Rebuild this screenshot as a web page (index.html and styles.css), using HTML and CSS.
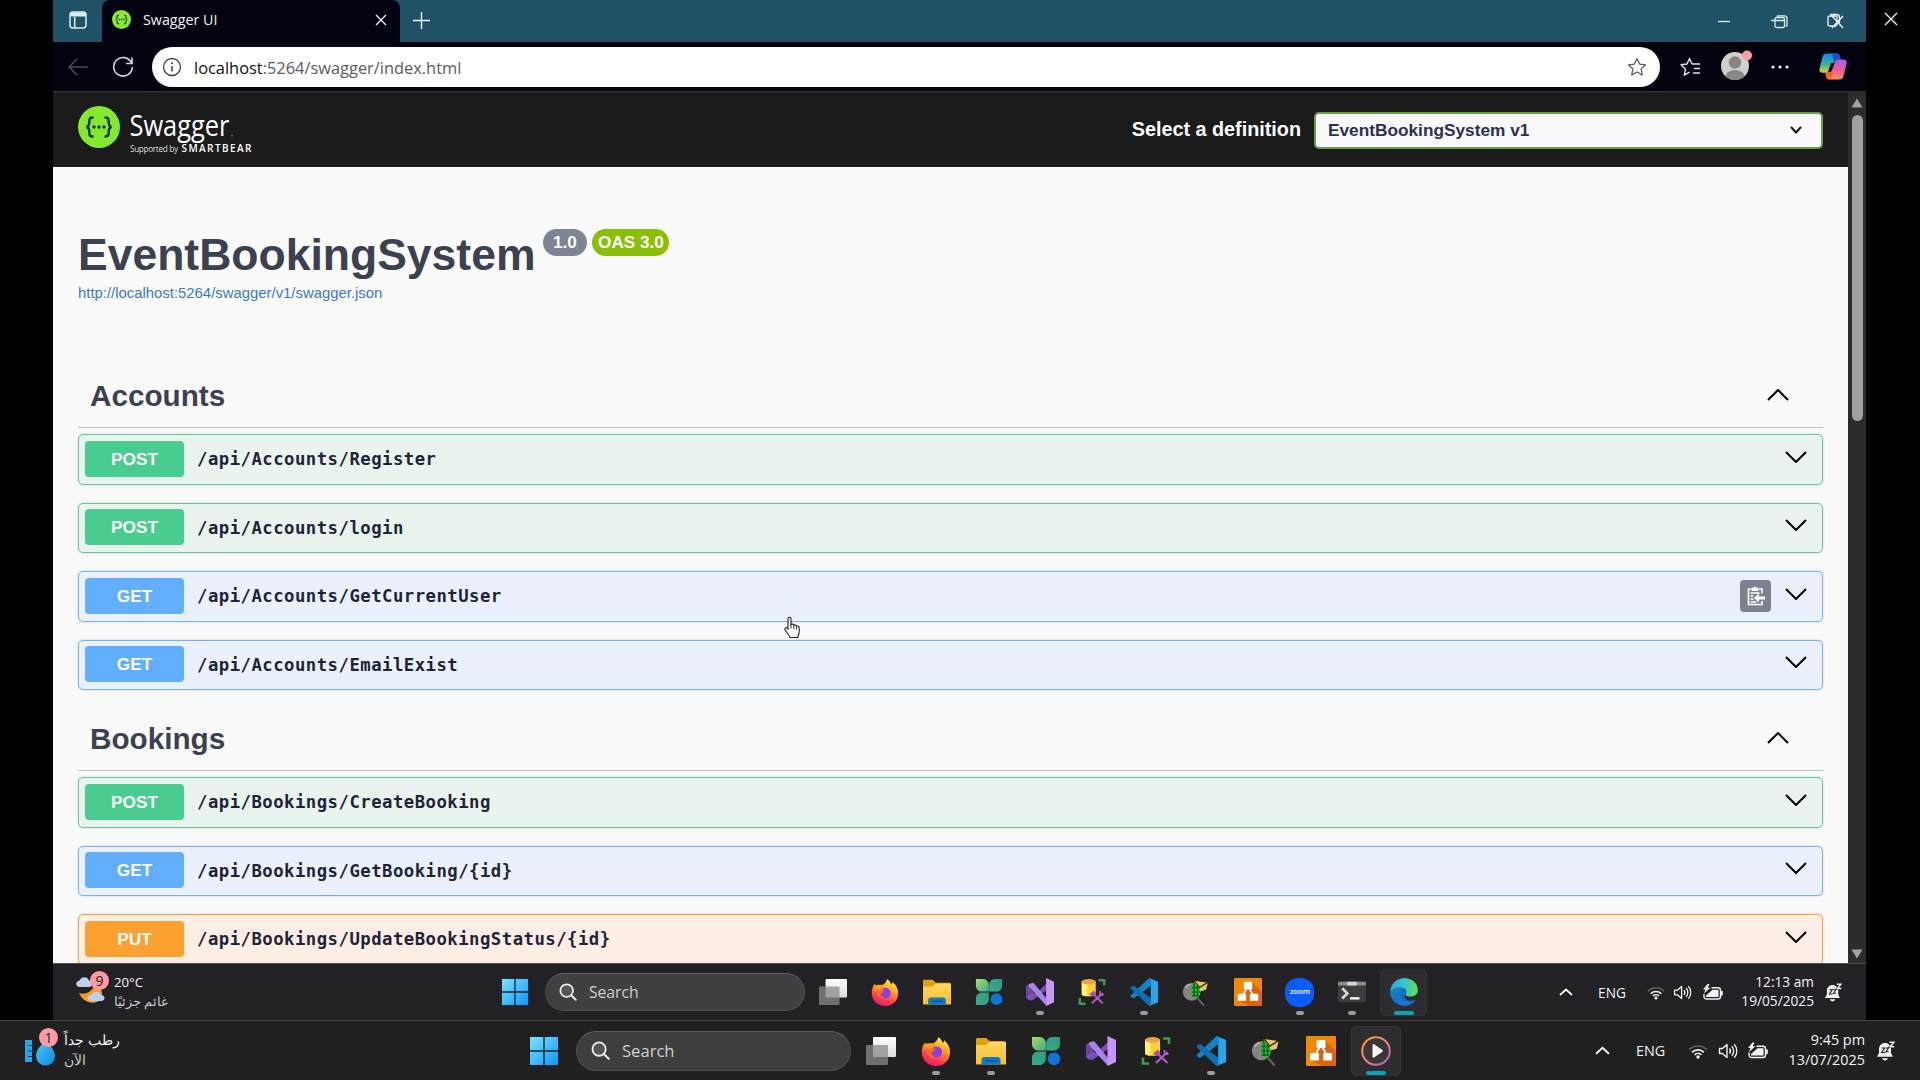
FILE: index.html
```html
<!DOCTYPE html>
<html lang="en">
<head>
<meta charset="utf-8">
<title>Swagger UI</title>
<link rel="stylesheet" href="styles.css">
</head>
<body>
<svg class="defs" width="0" height="0" aria-hidden="true">
  <defs>
    <linearGradient id="gWin" x1="0" y1="0" x2="1" y2="1"><stop offset="0" stop-color="#7ce4fc"/><stop offset="1" stop-color="#0c96ff"/></linearGradient>
    <linearGradient id="gFold" x1="0" y1="0" x2="0" y2="1"><stop offset="0" stop-color="#ffd75e"/><stop offset="1" stop-color="#fbbd2c"/></linearGradient>
    <linearGradient id="gFox" x1=".7" y1="0" x2=".3" y2="1"><stop offset="0" stop-color="#fff04a"/><stop offset=".4" stop-color="#ff9a1f"/><stop offset=".75" stop-color="#ff3850"/><stop offset="1" stop-color="#e8127f"/></linearGradient>
    <linearGradient id="gLeafA" x1="0" y1="0" x2="1" y2="1"><stop offset="0" stop-color="#a4e06a"/><stop offset="1" stop-color="#3faa86"/></linearGradient>
    <linearGradient id="gLeafB" x1="0" y1="1" x2="1" y2="0"><stop offset="0" stop-color="#39a88c"/><stop offset="1" stop-color="#2f9e7d"/></linearGradient>
    <linearGradient id="gDrop" x1="0" y1="0" x2="1" y2="1"><stop offset="0" stop-color="#4cc8fa"/><stop offset="1" stop-color="#1188dd"/></linearGradient>
    <linearGradient id="gEdge" x1="0" y1=".2" x2="1" y2=".3"><stop offset="0" stop-color="#2aa5e8"/><stop offset=".5" stop-color="#35c6cb"/><stop offset="1" stop-color="#63df52"/></linearGradient>
    <linearGradient id="gEdgeB" x1="0" y1="0" x2="1" y2="1"><stop offset="0" stop-color="#1793e0"/><stop offset="1" stop-color="#0d4f9c"/></linearGradient>
    <linearGradient id="gPlay" x1="0" y1="0" x2="1" y2="1"><stop offset="0" stop-color="#ff9a3c"/><stop offset=".55" stop-color="#f0837c"/><stop offset="1" stop-color="#8a63d8"/></linearGradient>
    <linearGradient id="gCopA" x1="0" y1="0" x2="0" y2="1"><stop offset="0" stop-color="#1783f0"/><stop offset=".55" stop-color="#2fb5a0"/><stop offset="1" stop-color="#f0c92c"/></linearGradient>
    <linearGradient id="gCopB" x1="0" y1="0" x2="0" y2="1"><stop offset="0" stop-color="#a95cf0"/><stop offset=".5" stop-color="#f0589c"/><stop offset="1" stop-color="#ff9450"/></linearGradient>
    <linearGradient id="gWhite" x1="0" y1="0" x2="0" y2="1"><stop offset="0" stop-color="#fff"/><stop offset="1" stop-color="#dcdcdc"/></linearGradient>
  </defs>
  <symbol id="winlogo" viewBox="0 0 30 30"><g fill="url(#gWin)"><path d="M1 1h28v28H1z"/></g><path d="M15 0v30M0 15h30" stroke="#202022" stroke-width="1.4"/></symbol>
  <symbol id="glass" viewBox="0 0 20 20"><circle cx="8.5" cy="8.5" r="7" fill="#777" fill-opacity=".4" stroke="#ececec" stroke-width="1.9"/><path d="M13.6 13.6l5 5" stroke="#ececec" stroke-width="2.2" stroke-linecap="round"/></symbol>
  <symbol id="taskview" viewBox="0 0 30 30"><rect x="7" y="1" width="23" height="20" rx="1" fill="url(#gWhite)"/><rect x="0" y="9" width="22" height="20" rx="1" fill="#8b8b8b" fill-opacity=".75"/></symbol>
  <symbol id="firefox" viewBox="0 0 30 30"><path d="M17.500 1c2 1.500 3.500 3.500 4.300 6 .8-.6 1.200-1.500 1.200-2.700 4.300 3.500 6.500 8 6 13C28.300 25 22.500 30 15 30S1.200 24.500.8 16.700C.6 12.500 2 8.500 4.200 6c.1 1.300.6 2.500 1.500 3.300C7 7.800 9 7 11.500 7.500c2.500-.5 4.500-2.500 6-6.500z" fill="url(#gFox)"/><path d="M4 8c4-1.500 7.500-.8 10 1.500 1 1 3 1.300 5.500 1.200L15 14l-2 3-5-2-4-2z" fill="#ff9b22"/><circle cx="15.500" cy="16" r="5.600" fill="#8a3fe0"/><path d="M5 12c3 1.500 7 1 9.500 0-.5 2-1.500 3.500-4.500 4.500.5 2.500 2 4.500 5 5.500-5 1.500-10-3-10-10z" fill="#ff6a2a"/></symbol>
  <symbol id="folder" viewBox="0 0 30 30"><path d="M0 3.500c0-.8.500-1.500 1.500-1.500h9l3 3H28c1 0 2 .7 2 1.800V15H0z" fill="#e0a10f"/><path d="M0 9h10l3.500-3H28.500c1 0 1.500.7 1.500 1.500V28.500H0z" fill="url(#gFold)"/><path d="M5.500 28.500V24c0-2 1.200-3 3-3h13c1.800 0 3 1 3 3v4.500z" fill="#1078c8"/><path d="M9 24.800h12" stroke="#0b4f8f" stroke-width="1.300"/></symbol>
  <symbol id="leaves" viewBox="0 0 30 30"><path d="M1 1h7.500c3.500 0 6.300 2.800 6.300 6.300v7.200H7.300C3.800 14.500 1 11.700 1 8.200z" fill="url(#gLeafA)"/><path d="M29 1h-7.500c-3.500 0-6.300 2.800-6.300 6.300v7.200h7.500c3.500 0 6.300-2.800 6.300-6.300z" fill="url(#gLeafB)"/><path d="M1 29h7.500c3.500 0 6.300-2.800 6.300-6.300v-7.200H7.300C3.800 15.500 1 18.300 1 21.800z" fill="url(#gLeafB)"/><circle cx="23" cy="22.700" r="6.300" fill="#0f74d8"/></symbol>
  <symbol id="vs" viewBox="0 0 30 30"><path d="M0 9l3-2.500 4 3v11l-4 3L0 21z" fill="#6a43a3"/><path d="M3 23.500L22 6v7L6.500 24z" fill="#7a4fb5"/><path d="M3 23.500L0 21l7-6 3 3z" fill="#7d55bb"/><path d="M3 6.500L8 5l14 17v8L3 9z" fill="#a884ea"/><path d="M21.500 0L30 4v22l-8.500 4z" fill="#c795f5"/></symbol>
  <symbol id="dbtools" viewBox="0 0 30 30"><path d="M4 3.500v14c0 3 15 3 15 0v-14z" fill="#ffd42a"/><path d="M4 3.500v14c0 1.500 3 2 5.500 2.200V4z" fill="#fff07a"/><ellipse cx="11.500" cy="4" rx="7.500" ry="2.900" fill="#eaa348"/><path d="M22 2.500h6V8M8 27.500H2V21.500" fill="none" stroke="#3f9c47" stroke-width="2.600"/><path d="M15 16l11.500 11M26.500 16L15 27" stroke="#b058c8" stroke-width="2.200" fill="none"/><path d="M12 17.500l5-4 2.500 3.500-3.500 3z" fill="#a34dbc"/><path d="M23.500 14l0 4h4" stroke="#b058c8" stroke-width="1.800" fill="none"/></symbol>
  <symbol id="vscode" viewBox="0 0 30 30"><path d="M22 8.500L4 22 .8 20.300V18.800L20.500 0l2 .6z" fill="#1583cc"/><path d="M22 21.500L4 8 .8 9.700v1.500L20.500 30l2-.6z" fill="#0f6fb5"/><path d="M21 .2L30 4v22l-9 3.800c.8-.3 1.200-1 1.200-2V2.200c0-1-.4-1.700-1.200-2z" fill="#2ba4ee"/></symbol>
  <symbol id="netscan" viewBox="0 0 30 30"><path d="M11 2L28.500 4.500 26.500 13l-9 3z" fill="#e8c46a" stroke="#241c08" stroke-width="1.300"/><path d="M12 2l7 8 9-5.500" fill="none" stroke="#241c08" stroke-width="1.300"/><circle cx="10.300" cy="14.800" r="9.500" fill="#858585"/><path d="M10.500 5.500c5.500 0 9 4 9 9.500-.2 2.500-1 5-3 6.500l-6-2z" fill="#13c52a"/><path d="M13 6v14M16.500 8v12M10.500 10.500h8.500M10.500 15h9M10.500 19h7.500" stroke="#064d10" stroke-width="1.200"/><path d="M4 11c.8-3 3-4 5-4" stroke="#bbb" stroke-width="1.500" fill="none"/><path d="M17 22l6.500 7.500" stroke="#666" stroke-width="2"/></symbol>
  <symbol id="drawio" viewBox="0 0 30 30"><rect width="30" height="30" rx="1" fill="#f08705"/><path d="M19 4l11 11v15H16L5 24z" fill="#d9660d"/><path d="M15 9L8.500 20M15 9l6.500 11" stroke="#fff" stroke-width="1.900"/><rect x="10.500" y="4" width="9" height="8" rx="1" fill="#fff"/><rect x="4" y="17" width="9" height="7.500" rx="1" fill="#fff"/><rect x="17" y="17" width="9" height="7.500" rx="1" fill="#fff"/></symbol>
  <symbol id="terminal" viewBox="0 0 30 30"><rect y="4" width="30" height="22" rx="1.500" fill="#3d3d3f"/><path d="M0 8V5.500C0 4.500.6 4 1.500 4h27c.9 0 1.500.5 1.500 1.500V8z" fill="#8c8c8c"/><path d="M10 4h10v4H10z" fill="#d5d5d5"/><path d="M4.500 11l5.500 5.500L4.500 22" fill="none" stroke="#d8d8d8" stroke-width="2.800"/><path d="M13 21.800h10" stroke="#fff" stroke-width="2.500"/></symbol>
  <symbol id="edge" viewBox="0 0 30 30"><circle cx="15" cy="15" r="14.700" fill="url(#gEdgeB)"/><path d="M.5 14C1.500 5.500 7.500.3 15.500.3 24 .3 30 6 29.700 13c-.3 5-4 7-8 7-3.500 0-5.500-1.200-4.700-2.500 1.800-2 1-5.500-2.500-6.800C9.500 9 3.500 10 .5 14z" fill="url(#gEdge)"/><path d="M10.500 15.500c-.8 6 4.500 10.300 10 9.700 3-.3 5.500-1.500 7.500-2.700-3.500 6-10 8.500-16 6.500-6-2.300-7.500-10-1.500-13.500z" fill="#1b74cf"/><path d="M17 17.500c-.6 1.500 1.500 2.600 4.700 2.500 3.200 0 6-1 7.300-3.500l1 3.500-2 3c-3.500 2-9 2-11.500-1-1.500-1.700-1-3.500.5-4.500z" fill="#2d2d30"/></symbol>
  <symbol id="player" viewBox="0 0 30 30"><circle cx="15" cy="15" r="13.800" fill="#3a3638" stroke="url(#gPlay)" stroke-width="2"/><path d="M11.500 9.200c0-1 .8-1.400 1.600-1l8 5.500c1 .7 1 1.700 0 2.400l-8 5.500c-.8.500-1.600 0-1.600-1z" fill="#f4f4f4"/></symbol>
  <symbol id="caret" viewBox="0 0 14 8"><path d="M1 7l6-5.500L13 7" fill="none" stroke="#f2f2f2" stroke-width="1.800"/></symbol>
  <symbol id="wifi" viewBox="0 0 20 16"><path d="M1 6.500a13 13 0 0118 0" fill="none" stroke="#666" stroke-width="1.500"/><path d="M4 9.300a8.500 8.500 0 0112 0M6.600 11.800a5 5 0 016.800 0" fill="none" stroke="#f2f2f2" stroke-width="1.700"/><circle cx="10" cy="14" r="1.700" fill="#f2f2f2"/></symbol>
  <symbol id="vol" viewBox="0 0 20 16"><path d="M1 5.500h3L8.500 1.500v13L4 10.500H1z" fill="none" stroke="#f2f2f2" stroke-width="1.400" stroke-linejoin="round"/><path d="M11 5.500c1.200 1.500 1.200 3.500 0 5" fill="none" stroke="#f2f2f2" stroke-width="1.400"/><path class="wave2" d="M13.300 3.200c2.500 2.700 2.500 6.900 0 9.600" fill="none" stroke-width="1.300"/><path class="wave3" d="M15.700 1.200c3.500 4 3.500 9.600 0 13.600" fill="none" stroke-width="1.300"/></symbol>
  <symbol id="batt" viewBox="0 0 20 16"><path d="M8.500 3.700H15a2.500 2.500 0 012.500 2.500V12.500A2.500 2.500 0 0115 15H3.500A2.500 2.500 0 011 12.500V10" fill="none" stroke="#f2f2f2" stroke-width="1.400"/><path d="M3 13V11.500L9.500 5.700h6V13z" fill="#f2f2f2"/><path d="M18 7h1.800v4.500H18z" fill="#f2f2f2"/><path d="M4.500 0L0 5.500h2.500L1 9.500 7.500 3.700H4.700L6.500 0z" fill="#f2f2f2"/></symbol>
  <symbol id="bell" viewBox="0 0 18 20"><path d="M8 2C4.500 2 2 4.600 2 8.200V12L0 15.800h15.800L14 12V8C14 4.500 11.500 2 8 2zM5 17.200c.7 1.500 1.800 2.200 3 2.200s2.300-.7 3-2.200z" fill="#f2f2f2"/><path d="M4.600 7h3.200l-3.200 4.500H8M9 7h2.500L9 10.800h2.800" fill="none" stroke="#202022" stroke-width="1.100"/><path d="M12.500 1.200h4.300l-3.600 4.600h4" fill="none" stroke="#202022" stroke-width="2.600"/><path d="M12.500 1.200h4.300l-3.600 4.600h4" fill="none" stroke="#f2f2f2" stroke-width="1.500"/></symbol>
  <symbol id="swag" viewBox="0 0 42 42"><circle cx="21" cy="21" r="21" fill="#85ea2d"/><g fill="none" stroke="#173647" stroke-width="2.500"><path d="M15.500 11.500c-3.500-.2-4.300 1-4.200 4 .1 3-.2 5-2.800 5.500 2.600.5 2.900 2.500 2.800 5.500-.1 3 .7 4.200 4.200 4M26.500 11.500c3.500-.2 4.300 1 4.200 4-.1 3 .2 5 2.800 5.500-2.600.5-2.900 2.500-2.800 5.500.1 3-.7 4.200-4.200 4"/></g><g fill="#173647"><circle cx="16" cy="21" r="1.700"/><circle cx="21" cy="21" r="1.700"/><circle cx="26" cy="21" r="1.700"/></g></symbol>
  <symbol id="down" viewBox="0 0 22 12"><path d="M1 1l10 10L21 1" fill="none" stroke="#000" stroke-width="2"/></symbol>
  <symbol id="up" viewBox="0 0 22 12"><path d="M1 11L11 1l10 10" fill="none" stroke="#000" stroke-width="2"/></symbol>
</svg>

<div class="screen">
  <div class="stage">
    <div class="window">
      <div class="tabstrip">
        <div class="workspace"><svg width="18" height="18" viewBox="0 0 18 18" fill="none" stroke="#d9eef5" stroke-width="1.500"><rect x="1" y="1" width="16" height="16" rx="3"/><path d="M1.500 3.500h15" stroke-width="4"/><path d="M5.700 6v11"/></svg></div>
        <div class="tab">
          <svg width="19" height="19"><use href="#swag"/></svg>
          <span class="tab-title">Swagger UI</span>
          <svg width="12" height="12" viewBox="0 0 12 12"><path d="M1 1l10 10M11 1L1 11" stroke="#eee" stroke-width="1.400"/></svg>
        </div>
        <svg class="newtab" width="17" height="17" viewBox="0 0 17 17"><path d="M8.500 0v17M0 8.500h17" stroke="#eaf5fa" stroke-width="1.400"/></svg>
        <div class="controls">
          <svg width="56" height="20" viewBox="0 0 56 20"><path d="M21 10.500h12" stroke="#eaf5fa" stroke-width="1.300"/></svg>
          <svg width="56" height="20" viewBox="0 0 56 20" fill="none" stroke="#d9ebf2" stroke-width="1.300"><rect x="22" y="6.500" width="9.500" height="10" rx="1.500"/><path d="M24.500 6V4.800h7c1.500 0 2.500 1 2.500 2.500v7.500h-1.500M18 9.500h14"/></svg>
          <svg width="57" height="20" viewBox="0 0 57 20" fill="none" stroke="#f2f8fa" stroke-width="1.300"><rect x="19" y="5" width="9" height="10" rx="1.500"/><path d="M22 4.500V3.500h5.500c2 0 3 1 3 3V12M23 5l11 12M34 5L23 17"/></svg>
        </div>
      </div>
      <div class="toolbar">
        <svg class="back" width="20" height="18" viewBox="0 0 20 18"><path d="M9 1L1 9l8 8M1 9h19" fill="none" stroke="#4c4d57" stroke-width="1.500"/></svg>
        <svg class="reload" width="22" height="22" viewBox="0 0 22 22"><path d="M19.500 7A9.300 9.300 0 1020.300 11M20 1.500V7.500H14" fill="none" stroke="#d5d5d9" stroke-width="1.600"/></svg>
        <div class="address">
          <svg width="20" height="20" viewBox="0 0 20 20"><circle cx="10" cy="10" r="8.500" fill="none" stroke="#444" stroke-width="1.300"/><path d="M10 9v5.500" stroke="#444" stroke-width="1.500"/><circle cx="10" cy="6.300" r="1" fill="#444"/></svg>
          <span class="url"><b>localhost</b>:5264/swagger/index.html</span>
          <svg width="20" height="20" viewBox="0 0 20 20"><path d="M10 1.500l2.600 5.600 6 .7-4.500 4.100 1.200 6.100L10 15l-5.300 3 1.200-6.100L1.400 7.800l6-.7z" fill="none" stroke="#555" stroke-width="1.200" stroke-linejoin="round"/></svg>
        </div>
        <svg class="favs" width="21" height="20" viewBox="0 0 21 20"><path d="M12 6.500h-.3L9.500 1.500 7 7 1 7.800l4.500 4.100-1.200 6.300 5.200-3M12 7h8M14 11.500h6M13 16h7" fill="none" stroke="#e3e3e6" stroke-width="1.400" stroke-linejoin="round"/></svg>
        <svg class="avatar" width="32" height="32" viewBox="0 0 32 32"><clipPath id="av"><circle cx="15" cy="17" r="14"/></clipPath><circle cx="15" cy="17" r="14" fill="#d2cfcd"/><g clip-path="url(#av)" fill="#8a8585"><circle cx="15" cy="13.500" r="6.200"/><ellipse cx="15" cy="29" rx="10" ry="8"/></g><circle cx="27" cy="6.500" r="5" fill="#ff9daa"/></svg>
        <svg class="dots" width="18" height="4" viewBox="0 0 18 4" fill="#eee"><circle cx="2" cy="2" r="1.600"/><circle cx="9" cy="2" r="1.600"/><circle cx="16" cy="2" r="1.600"/></svg>
        <svg class="copilot" width="28" height="27" viewBox="0 0 28 27"><path d="M7.500.5h10c2 0 3 1 3.500 3l.6 3h-3c-2 0-3 .8-3.600 2.800l-2.500 7.500c-.7 2-1.800 3-4 3H3.500c-2.500 0-3.500-1.800-3-4.200L3.500 4C4 1.700 5.300.5 7.500.5z" fill="url(#gCopA)"/><path d="M13 .5h4.500c2 0 3 1 3.500 3l.6 3h-3c-2 0-3 .8-3.600 2.800z" fill="#1a52c9"/><path d="M20.500 26.500h-10c-2 0-3-1-3.500-3l-.6-4h2.500c2.200 0 3.300-1 4-3L15.500 9.500c.6-2 1.600-3 3.500-3h5.500c2.500 0 3.500 1.800 3 4.200L24.500 23c-.6 2.300-1.800 3.500-4 3.500z" fill="url(#gCopB)"/><path d="M12 10h3.500l-3.300 9H9z" fill="#02030f"/><path d="M6.400 19.500h3c2 0 3-1 3.500-2.500l1 4-3.400 5.500c-2 0-3-1-3.500-3z" fill="#f4632e"/></svg>
      </div>

      <div class="page">
        <main class="content">
          <header class="topbar">
            <svg class="logo" width="180" height="50" viewBox="0 0 180 50">
              <use href="#swag" width="42" height="42"/>
              <text x="51.500" y="30" class="brand" textLength="100" lengthAdjust="spacingAndGlyphs">Swagger</text>
              <circle cx="154" cy="29.500" r="1" fill="#666"/>
              <text x="52" y="46" class="support" textLength="48">Supported by</text>
              <text x="103.500" y="46" class="smart" textLength="70">SMARTBEAR</text>
            </svg>
            <label class="pick">Select a definition
              <span class="select">EventBookingSystem v1
                <svg width="12" height="8" viewBox="0 0 12 8"><path d="M1 1l5 5.500L11 1" fill="none" stroke="#111" stroke-width="2"/></svg>
              </span>
            </label>
          </header>

          <section class="info">
            <h1>EventBookingSystem</h1><span class="badge grey">1.0</span><span class="badge oas">OAS 3.0</span>
          </section>
          <a class="spec">http://localhost:5264/swagger/v1/swagger.json</a>

          <section class="group first">
            <h2>Accounts <svg width="22" height="12"><use href="#up"/></svg></h2>
            <div class="op post"><span class="verb">POST</span><span class="path">/api/Accounts/Register</span><svg width="22" height="12"><use href="#down"/></svg></div>
            <div class="op post"><span class="verb">POST</span><span class="path">/api/Accounts/login</span><svg width="22" height="12"><use href="#down"/></svg></div>
            <div class="op get"><span class="verb">GET</span><span class="path">/api/Accounts/GetCurrentUser</span>
              <span class="copy"><svg width="18" height="20" viewBox="0 0 18 20"><path d="M11 18.500H1.500V3H4M12 3h3v4.500M15 15v3.500h-4" fill="none" stroke="#fff" stroke-width="1.600"/><path d="M4.500 1.800h2C6.800.5 9.200.5 9.500 1.800h2V5h-7z" fill="#fff"/><path d="M3.500 7h9M3.500 10h3M3.500 13h3M3.500 16h6" stroke="#fff" stroke-width="1.300"/><path d="M7 12l5-4.500V10.500h6v3h-6v3z" fill="#fff"/></svg></span>
              <svg width="22" height="12"><use href="#down"/></svg></div>
            <div class="op get"><span class="verb">GET</span><span class="path">/api/Accounts/EmailExist</span><svg width="22" height="12"><use href="#down"/></svg></div>
          </section>

          <section class="group">
            <h2>Bookings <svg width="22" height="12"><use href="#up"/></svg></h2>
            <div class="op post"><span class="verb">POST</span><span class="path">/api/Bookings/CreateBooking</span><svg width="22" height="12"><use href="#down"/></svg></div>
            <div class="op get"><span class="verb">GET</span><span class="path">/api/Bookings/GetBooking/{id}</span><svg width="22" height="12"><use href="#down"/></svg></div>
            <div class="op put"><span class="verb">PUT</span><span class="path">/api/Bookings/UpdateBookingStatus/{id}</span><svg width="22" height="12"><use href="#down"/></svg></div>
          </section>
        </main>
        <div class="scrollbar">
          <svg width="12" height="10" viewBox="0 0 12 10"><path d="M6 0.500L11.500 9.500H.5z" fill="#a3a3a3"/></svg>
          <div class="thumb"></div>
          <svg width="12" height="10" viewBox="0 0 12 10"><path d="M6 9.500L11.500 .5H.5z" fill="#a3a3a3"/></svg>
        </div>
      </div>

      <div class="taskbar inner">
        <div class="weather">
          <span class="wicon"><svg width="30" height="32" viewBox="0 0 30 32"><path d="M3 17c5 2 13 0 16-9 8 4 9 11 4 17-7 4-16 1-20-8z" fill="#f59d2a"/><path d="M4 11C-1 11-1 5 3.500 4.500 5 0 12 0 13 4.500c4 .5 4 6.500 0 6.500z" fill="#c3cdf2"/><path d="M15 25c-5-.5-4-6 .5-6 1.500-4.500 8-4.500 9.500 0 4.500 0 5 6 0 6z" fill="#b9d0f4"/></svg><i class="count">9</i></span>
          <span class="wtext"><span>20°C</span><span class="sub" dir="rtl">غائم جزئيًا</span></span>
        </div>
        <div class="cell start"><svg><use href="#winlogo"/></svg></div>
        <div class="search"><svg width="18" height="18"><use href="#glass"/></svg>Search</div>
        <div class="cell"><svg><use href="#taskview"/></svg></div>
        <div class="cell"><svg><use href="#firefox"/></svg></div>
        <div class="cell"><svg><use href="#folder"/></svg></div>
        <div class="cell"><svg><use href="#leaves"/></svg></div>
        <div class="cell run"><svg><use href="#vs"/></svg></div>
        <div class="cell"><svg><use href="#dbtools"/></svg></div>
        <div class="cell run"><svg><use href="#vscode"/></svg></div>
        <div class="cell"><svg><use href="#netscan"/></svg></div>
        <div class="cell"><svg><use href="#drawio"/></svg></div>
        <div class="cell run"><span class="zoomapp">zoom</span></div>
        <div class="cell run"><svg><use href="#terminal"/></svg></div>
        <div class="cell run active"><svg><use href="#edge"/></svg></div>
        <div class="tray">
          <svg class="caret" width="14" height="8"><use href="#caret"/></svg>
          <span class="lang">ENG</span>
          <svg class="wifi" width="18" height="15"><use href="#wifi"/></svg>
          <svg class="vol" width="20" height="15"><use href="#vol"/></svg>
          <svg class="batt" width="20" height="16"><use href="#batt"/></svg>
          <span class="clock"><span>12:13 am</span><span>19/05/2025</span></span>
          <svg class="bell" width="17" height="19"><use href="#bell"/></svg>
        </div>
      </div>
    </div>
    <svg class="exit" width="14" height="14" viewBox="0 0 14 14"><path d="M1 1l12 12M13 1L1 13" stroke="#eee" stroke-width="1.400"/></svg>
  </div>

  <div class="taskbar outer">
    <div class="weather">
      <span class="wicon"><svg width="30" height="32" viewBox="0 0 30 32"><path d="M0 5h7v22H0z" fill="#2ba4ea"/><path d="M3 10.500h4M3 16h4M3 21.500h4" stroke="#0b3f66" stroke-width="1.200"/><path d="M20.500 4c3 6 9.500 9.500 9.500 17a9.500 9.500 0 01-19 0c0-7.500 6.500-11 9.500-17z" fill="url(#gDrop)"/></svg><i class="count">1</i></span>
      <span class="wtext"><span dir="rtl">رطب جداً</span><span class="sub" dir="rtl">الآن</span></span>
    </div>
    <div class="cell start"><svg><use href="#winlogo"/></svg></div>
    <div class="search"><svg width="19" height="19"><use href="#glass"/></svg>Search</div>
    <div class="cell"><svg><use href="#taskview"/></svg></div>
    <div class="cell run"><svg><use href="#firefox"/></svg></div>
    <div class="cell run"><svg><use href="#folder"/></svg></div>
    <div class="cell"><svg><use href="#leaves"/></svg></div>
    <div class="cell"><svg><use href="#vs"/></svg></div>
    <div class="cell"><svg><use href="#dbtools"/></svg></div>
    <div class="cell run"><svg><use href="#vscode"/></svg></div>
    <div class="cell"><svg><use href="#netscan"/></svg></div>
    <div class="cell"><svg><use href="#drawio"/></svg></div>
    <div class="cell run active"><svg><use href="#player"/></svg></div>
    <div class="tray">
      <svg class="caret" width="15" height="9"><use href="#caret"/></svg>
      <span class="lang">ENG</span>
      <svg class="wifi" width="20" height="16"><use href="#wifi"/></svg>
      <svg class="vol" width="21" height="16"><use href="#vol"/></svg>
      <svg class="batt" width="20" height="17"><use href="#batt"/></svg>
      <span class="clock"><span>9:45 pm</span><span>13/07/2025</span></span>
      <svg class="bell" width="18" height="20"><use href="#bell"/></svg>
    </div>
  </div>

  <svg class="pointer" width="18" height="23" viewBox="0 0 18 23"><path d="M5 13V3c0-2.300 3-2.300 3 0v5.500c.8-.8 2.600-.5 2.800.7.900-.6 2.500-.2 2.700 1 1.200-.5 2.700.2 2.700 1.700V16c0 2-1.200 3.200-1.500 5.500H7C6.500 19 4 17.500 2 13.800c-.9-1.700 1.200-3 2.300-1.600z" fill="#fff" stroke="#222" stroke-width="1.100"/><path d="M8 8.500v4M10.800 9.500v3.500M13.500 10.500v3" stroke="#222" stroke-width=".9"/></svg>
</div>
</body>
</html>
```
FILE: styles.css
```css
* { box-sizing: border-box; }
body { margin: 0; background: #000; overflow: hidden; }
svg { display: block; flex: none; }
.defs { position: absolute; }
.screen {
  width: 1920px; height: 1080px; position: relative; overflow: hidden;
  display: flex; flex-direction: column;
  font-family: "Open Sans", "Noto Sans", sans-serif;
}
.stage { height: 1020px; display: flex; padding-left: 53px; }
.window { width: 1813px; height: 1020px; display: flex; flex-direction: column; }
.exit { margin: 12px 0 0 18px; }

/* browser chrome */
.tabstrip { height: 42px; background: #1f5267; display: flex; align-items: center; flex: none; }
.workspace { width: 49px; height: 42px; display: flex; align-items: center; justify-content: center; padding-bottom: 2px; }
.tab { width: 298px; height: 42px; background: #02030f; border-radius: 8px 8px 0 0; display: flex; align-items: center; padding: 0 13px 3px 10px; }
.tab-title { flex: 1; padding-left: 12px; color: #f2f2f2; font-size: 14.300px; }
.newtab { margin: 0 0 2px 13px; }
.controls { margin: 0 0 1px auto; display: flex; }
.toolbar { height: 49px; background: #02030f; display: flex; align-items: center; padding-left: 15px; flex: none; }
.reload { margin-left: 24px; }
.address { width: 1508px; height: 40px; margin-left: 18px; border-radius: 20px; background: #fff; display: flex; align-items: center; padding: 0 13px 0 10px; }
.url { flex: 1; padding: 1px 0 0 12px; font-size: 16.400px; color: #5c5c60; }
.url b { font-weight: 400; color: #111; }
.favs { margin-left: 20px; }
.avatar { margin-left: 19px; margin-bottom: 3px; }
.dots { margin-left: 19px; }
.copilot { margin-left: 30px; }

/* swagger page */
.page { height: 872px; display: flex; overflow: hidden; background: #fafafa; flex: none; }
.content { width: 1795px; font-family: "Liberation Sans", Arial, sans-serif; color: #3b4151; }
.topbar { height: 76px; background: #1b1b1c; border-top: 1px solid #3a3a3d; display: flex; align-items: center; justify-content: space-between; padding: 0 25px 0 25px; }
.logo { margin-top: 3px; }
.brand { font: 400 29px "Open Sans", sans-serif; fill: #fff; }
.support { font: 8.200px "Open Sans", sans-serif; fill: #ddd; }
.smart { font: 600 10px "Open Sans", sans-serif; fill: #fff; }
.pick { display: flex; align-items: center; gap: 13px; color: #fff; font-weight: 700; font-size: 19.800px; }
.select { width: 509px; height: 37px; margin-top: 1px; border: 2px solid #62a03f; border-radius: 5px; background: #f9f9fb; color: #2b3050; font-size: 17.250px; display: flex; align-items: center; justify-content: space-between; padding: 0 19px 0 12px; }
.info { display: flex; align-items: flex-start; margin: 62px 0 0 25px; height: 55px; }
h1 { margin: 0; font-size: 44.500px; line-height: 51px; }
.badge { height: 27px; line-height: 27px; border-radius: 14px; color: #fff; font-weight: 700; font-size: 17.200px; text-align: center; }
.grey { width: 44px; margin-left: 8px; background: #7d8492; padding-right: 1px; }
.oas { width: 77px; margin-left: 5px; background: #89bf04; }
.spec { display: block; margin-left: 25px; font-size: 14.880px; line-height: 18px; color: #3b7bc8; }
.group { margin: 0 25px; }
.group.first { margin-top: 60px; }
h2 { margin: 0 0 6px; height: 66px; border-bottom: 1px solid #c0c2c6; font-size: 29.700px; line-height: 34px; display: flex; justify-content: space-between; align-items: flex-start; padding: 17px 34px 0 12px; }
h2 svg { margin-top: 10px; }
.op { height: 50.500px; margin-bottom: 18px; border: 1.500px solid; border-radius: 5px; box-shadow: 0 0 3px rgba(0,0,0,.16); display: flex; align-items: center; padding: 0 15px 0 6px; }
.op > svg { margin-bottom: 5px; }
.op:last-child { margin-bottom: 15px; }
.verb { width: 99px; height: 36px; line-height: 36px; border-radius: 4px; color: #fff; text-align: center; font-weight: 700; font-size: 17.200px; margin-bottom: 1px; }
.path { flex: 1; padding-left: 13px; font: 700 17.300px "DejaVu Sans Mono", monospace; letter-spacing: .48px; color: #1e2438; }
.post { background: #e9f4ee; border-color: #5fc99c; }
.post .verb { background: #49cc90; }
.get { background: #eaf1fc; border-color: #76b2ee; }
.get .verb { background: #61affe; }
.put { background: #fdeee5; border-color: #f5a13c; }
.put .verb { background: #fca130; }
.copy { width: 31px; height: 32px; border-radius: 4px; background: #7d8293; display: flex; align-items: center; justify-content: center; margin: 0 14px 1px 0; }
.scrollbar { width: 18px; background: #2c2c2d; display: flex; flex-direction: column; align-items: center; padding: 7px 0 4px; }
.thumb { width: 11px; height: 306px; margin: 7px 0 auto; border-radius: 6px; background: #a0a0a0; }

/* taskbars */
.taskbar { display: flex; align-items: center; color: #f4f4f4; flex: none; }
.inner { height: 57px; background: #222125; border-top: 1px solid #55504f; font-size: 13.700px; }
.outer { height: 60px; background: #202020; border-top: 1px solid #444; font-size: 14.400px; }
.weather { display: flex; align-items: center; flex: none; }
.inner .weather { width: 436px; padding-left: 23px; }
.outer .weather { width: 516px; padding-left: 25px; }
.wicon { position: relative; width: 30px; }
.count { position: absolute; left: 14px; top: -5px; width: 19px; height: 19px; border-radius: 50%; background: #ff9aa5; color: #222; font-style: normal; font-size: 14px; line-height: 19px; text-align: center; }
.outer .count { top: -7px; }
.wtext { display: flex; flex-direction: column; align-items: flex-start; padding: 0 0 1px 8px; line-height: 19px; font-size: 13.200px; }
.outer .wtext { padding-left: 9px; line-height: 20px; font-size: 14px; }
.sub { color: #c8c8c8; }
.cell { position: relative; width: 51.900px; height: 47px; display: flex; align-items: center; justify-content: center; flex: none; }
.cell svg { width: 28px; height: 28px; }
.outer .cell { width: 55px; height: 50px; }
.outer .cell svg { width: 30px; height: 30px; }
.search { width: 260px; height: 38px; margin: 0 2px 0 4px; border-radius: 19px; background: #403f41; border: 1px solid #4e4d4f; border-top-color: #606062; display: flex; align-items: center; gap: 12px; padding-left: 13px; font-size: 15.700px; color: #d0d0d0; flex: none; }
.outer .search { width: 275px; height: 40px; margin: 0 2px 0 5px; border-radius: 20px; padding-left: 14px; gap: 12px; font-size: 16.600px; background: #3e3e3e; }
.run::after { content: ""; position: absolute; bottom: 1px; left: calc(50% - 4px); width: 8px; height: 4px; border-radius: 2px; background: #9b9b9b; }
.active::before { content: ""; position: absolute; inset: 0 2.500px; border-radius: 5px; background: #2d2d30; border: 1px solid #333336; z-index: 0; }
.active svg { position: relative; }
.active.run::after { width: 20px; left: calc(50% - 10px); background: #00a8b5; }
.zoomapp { width: 29px; height: 29px; border-radius: 13px; background: #0b5cff; color: #fff; font: 600 7.500px/27px "Open Sans", sans-serif; text-align: center; }
.tray { margin-left: auto; display: flex; align-items: center; }
.inner .tray { padding-right: 24px; }
.outer .tray { padding-right: 25px; }
.inner .wave2, .inner .wave3 { stroke: #666; }
.wave2, .wave3 { stroke: #f2f2f2; }
.lang { width: 28px; margin-left: 25px; text-align: center; white-space: nowrap; }
.inner .wifi { margin-left: 21px; }
.inner .vol { margin-left: 8px; }
.inner .batt { margin-left: 10px; }
.outer .wifi { margin-left: 24px; }
.outer .vol { margin-left: 10px; }
.outer .batt { margin-left: 9px; }
.outer .lang { margin-left: 26px; }
.clock { width: 91px; display: flex; flex-direction: column; align-items: flex-end; line-height: 19px; padding-bottom: 2px; }
.outer .clock { width: 97px; line-height: 20px; padding-bottom: 2px; }
.bell { margin-left: 11px; }
.outer .bell { margin-left: 12px; }

.pointer { position: absolute; left: 783px; top: 616px; }
```
